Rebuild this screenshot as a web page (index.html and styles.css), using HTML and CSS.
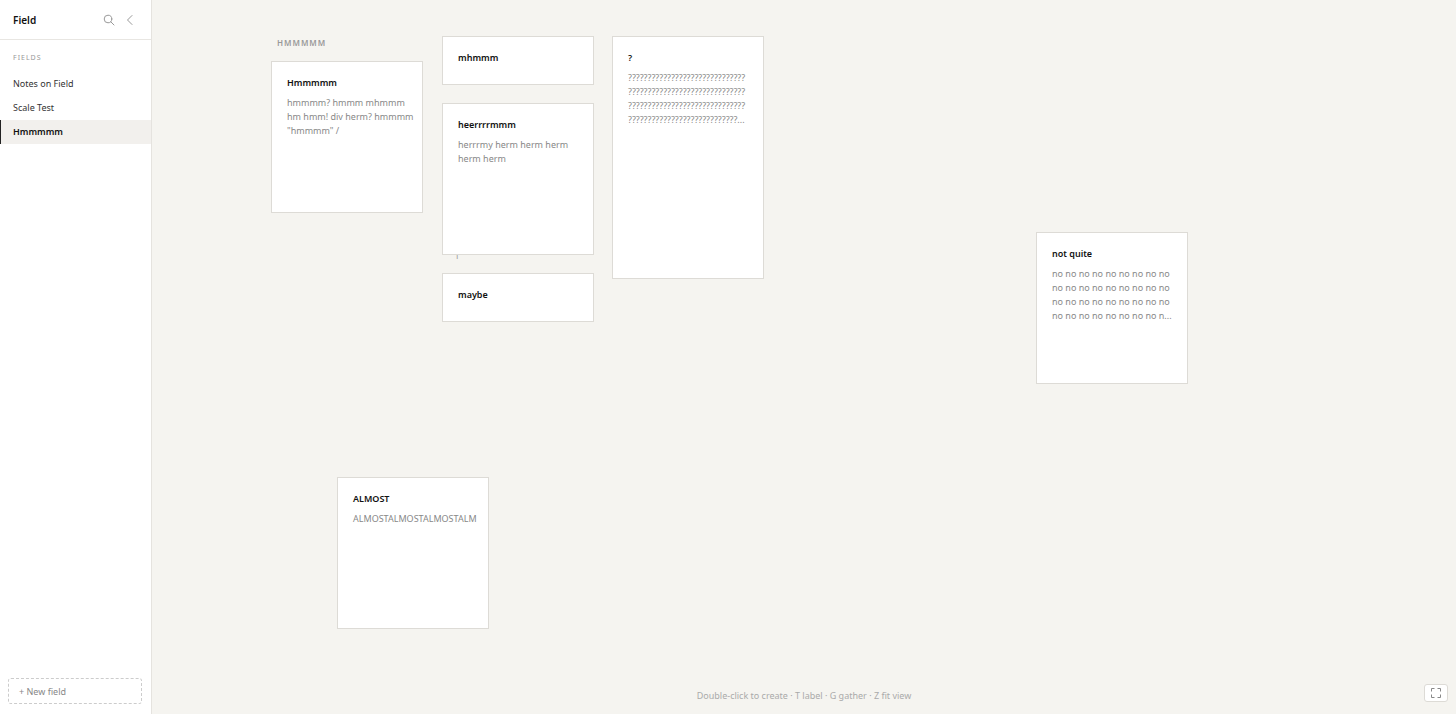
FILE: index.html
```html
<!DOCTYPE html>
<html lang="en">
<head>
    <meta charset="UTF-8">
    <meta name="viewport" content="width=device-width, initial-scale=1.0">
    <title>Field</title>
    <link rel="stylesheet" href="styles.css">
</head>
<body>
    <div class="app">
        <aside class="sidebar">
            <header class="sidebar-header">
                <h1 class="brand">Field</h1>
                <div class="header-actions">
                    <button class="icon-btn" type="button" aria-label="Search">
                        <svg width="12" height="12" viewBox="0 0 12 12" fill="none" stroke="currentColor" stroke-linecap="round">
                            <circle cx="5" cy="5" r="3.8"/>
                            <path d="M7.8 7.8 11 11"/>
                        </svg>
                    </button>
                    <button class="icon-btn" type="button" aria-label="Collapse sidebar">
                        <svg width="12" height="12" viewBox="0 0 12 12" fill="none" stroke="currentColor" stroke-linecap="round" stroke-linejoin="round">
                            <path d="M8 1.500 3.500 6 8 10.500"/>
                        </svg>
                    </button>
                </div>
            </header>

            <h2 class="section-title">Fields</h2>
            <nav class="field-list">
                <a class="field-link" href="#notes">Notes on Field</a>
                <a class="field-link" href="#scale">Scale Test</a>
                <a class="field-link active" href="#hmmmmm" aria-current="page">Hmmmmm</a>
            </nav>

            <button class="new-field" type="button">+ New field</button>
        </aside>

        <main class="canvas">
            <span class="label label-group">HMMMMM</span>
            <span class="label label-mark">|</span>

            <article class="card card-hmmmmm">
                <h3>Hmmmmm</h3>
                <p>hmmmm? hmmm mhmmm<br>hm hmm! div herm? hmmmm<br>"hmmmm" /</p>
            </article>
            <article class="card small card-mhmmm">
                <h3>mhmmm</h3>
            </article>
            <article class="card card-heerm">
                <h3>heerrrrmmm</h3>
                <p>herrrmy herm herm herm<br>herm herm</p>
            </article>
            <article class="card small card-maybe">
                <h3>maybe</h3>
            </article>
            <article class="card tall card-question">
                <h3>?</h3>
                <p>??????????????????????????????<br>??????????????????????????????<br>??????????????????????????????<br>????????????????????????????...</p>
            </article>
            <article class="card card-notquite">
                <h3>not quite</h3>
                <p>no no no no no no no no no<br>no no no no no no no no no<br>no no no no no no no no no<br>no no no no no no no no n...</p>
            </article>
            <article class="card card-almost">
                <h3>ALMOST</h3>
                <p>ALMOSTALMOSTALMOSTALM</p>
            </article>

            <p class="hint">Double-click to create · T label · G gather · Z fit view</p>
            <button class="fit-btn" type="button" aria-label="Fit view">
                <svg width="12" height="12" viewBox="0 0 12 12" fill="none" stroke="currentColor">
                    <path d="M1.5 4.5v-3h3M7.5 1.5h3v3M10.5 7.5v3h-3M4.5 10.5h-3v-3"/>
                </svg>
            </button>
        </main>
    </div>
</body>
</html>
```

FILE: styles.css
```css
* {
    margin: 0;
    padding: 0;
    box-sizing: border-box;
}

body {
    font-family: 'Noto Sans', 'Open Sans', sans-serif;
    font-size: 9px;
    color: #111;
    background: #f5f4f0;
}

button {
    font-family: inherit;
    cursor: pointer;
}

.app {
    display: flex;
    height: 100vh;
}

/* Sidebar */
.sidebar {
    display: flex;
    flex-direction: column;
    flex: 0 0 152px;
    background: #fff;
    border-right: 1px solid #e5e3df;
}

.sidebar-header {
    display: flex;
    align-items: center;
    justify-content: space-between;
    height: 40px;
    padding: 0 15px 0 13px;
    border-bottom: 1px solid #e8e6e2;
}

.brand {
    font-size: 10px;
    font-weight: 600;
}

.header-actions {
    display: flex;
    gap: 9px;
}

.icon-btn {
    display: flex;
    border: none;
    background: none;
    color: #999;
}

.section-title {
    padding: 12px 13px 8px;
    font-size: 7px;
    line-height: 12px;
    font-weight: 400;
    letter-spacing: 1px;
    text-transform: uppercase;
    color: #999;
}

.field-list {
    flex: 1;
}

.field-link {
    display: block;
    padding: 0 13px;
    font-size: 9px;
    line-height: 24px;
    color: #333;
    text-decoration: none;
}

.field-link.active {
    background: #f2f0ed;
    box-shadow: inset 1px 0 #222;
    font-weight: 600;
    color: #111;
}

.new-field {
    height: 26px;
    margin: 0 9px 10px 8px;
    padding: 0 10px;
    border: 1px dashed #ccc;
    border-radius: 3px;
    background: none;
    font-size: 9px;
    text-align: left;
    color: #888;
}

/* Canvas */
.canvas {
    position: relative;
    flex: 1;
    overflow: hidden;
}

.label {
    position: absolute;
    font-size: 8px;
    line-height: 12px;
    font-weight: 600;
    letter-spacing: 1px;
    color: #999;
}

.label-group {
    left: 125px;
    top: 37px;
}

.label-mark {
    left: 303px;
    top: 248px;
}

.card {
    position: absolute;
    width: 152px;
    height: 152px;
    padding: 14px 15px;
    border: 1px solid #dddbd6;
    background: #fff;
}

.card.small {
    height: 49px;
}

.card.tall {
    height: 243px;
}

.card h3 {
    margin-bottom: 6px;
    font-size: 9px;
    line-height: 14px;
    font-weight: 600;
}

.card p {
    font-size: 9px;
    line-height: 14px;
    white-space: nowrap;
    color: #888;
}

.card-hmmmmm {
    left: 119px;
    top: 61px;
}

.card-mhmmm {
    left: 290px;
    top: 36px;
}

.card-heerm {
    left: 290px;
    top: 103px;
}

.card-maybe {
    left: 290px;
    top: 273px;
}

.card-question {
    left: 460px;
    top: 36px;
}

.card-notquite {
    left: 884px;
    top: 232px;
}

.card-almost {
    left: 185px;
    top: 477px;
}

.hint {
    position: absolute;
    bottom: 12px;
    left: 0;
    right: 0;
    font-size: 9px;
    line-height: 12px;
    text-align: center;
    color: #aaa;
}

.fit-btn {
    position: absolute;
    right: 8px;
    bottom: 12px;
    display: flex;
    align-items: center;
    justify-content: center;
    width: 24px;
    height: 18px;
    border: 1px solid #dddbd6;
    border-radius: 3px;
    background: #fff;
    color: #888;
}
```
